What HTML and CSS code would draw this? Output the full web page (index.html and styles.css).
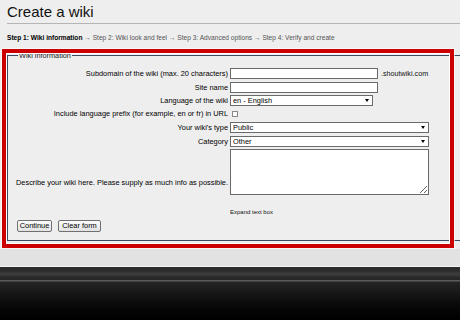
FILE: index.html
```html
<!DOCTYPE html>
<html>
<head>
<meta charset="utf-8">
<link rel="stylesheet" href="styles.css">
</head>
<body>
<div class="page">
  <h1 class="title">Create a wiki</h1>
  <p class="steps"><b class="step-current">Step 1: Wiki information</b> → Step 2: Wiki look and feel → Step 3: Advanced options → Step 4: Verify and create</p>
  <fieldset class="wiki-info">
    <legend class="legend">Wiki information</legend>
    <div class="form-grid">
      <label class="lbl">Subdomain of the wiki (max. 20 characters)</label>
      <div class="ctl"><input class="txt" type="text"><span class="suffix">.shoutwiki.com</span></div>

      <label class="lbl">Site name</label>
      <div class="ctl"><input class="txt" type="text"></div>

      <label class="lbl">Language of the wiki</label>
      <div class="ctl"><span class="sel sel-lang"><select class="sel-box"><option>en - English</option></select></span></div>

      <label class="lbl">Include language prefix (for example, en or fr) in URL</label>
      <div class="ctl"><input class="chk" type="checkbox"></div>

      <label class="lbl">Your wiki's type</label>
      <div class="ctl"><span class="sel sel-wide"><select class="sel-box"><option>Public</option></select></span></div>

      <label class="lbl">Category</label>
      <div class="ctl"><span class="sel sel-wide"><select class="sel-box"><option>Other</option></select></span></div>

      <label class="lbl lbl-desc">Describe your wiki here. Please supply as much info as possible.</label>
      <div class="ctl"><textarea class="area"></textarea></div>

      <div class="spacer"></div>
      <div class="ctl ctl-expand"><span class="expand">Expand text box</span></div>

      <div class="buttons">
        <button class="btn btn-continue" type="button">Continue</button>
        <button class="btn btn-clear" type="button">Clear form</button>
      </div>
    </div>
  </fieldset>
  <div class="highlight"></div>
</div>
<div class="band"></div>
<div class="footer"></div>
</body>
</html>
```

FILE: styles.css
```css
html, body {
  margin: 0;
  padding: 0;
}
body {
  width: 460px;
  height: 320px;
  overflow: hidden;
  background: #eeeeee;
  font-family: "Liberation Sans", Arial, sans-serif;
  color: #000;
}
.page {
  position: relative;
  height: 249px;
  padding-left: 7px;
  overflow: hidden;
  background: #eeeeee;
}
.title {
  margin: 3px 0 0 0;
  padding: 0 0 2px 0;
  font-size: 15px;
  line-height: 18px;
  font-weight: normal;
  color: #111;
  border-bottom: 1px solid #b5b5b5;
}
.steps {
  margin: 9px 0 0 0;
  font-size: 6.6px;
  line-height: 9px;
  color: #555;
  white-space: nowrap;
}
.step-current {
  color: #000;
  font-weight: bold;
}
.wiki-info {
  margin: 9px 0 0 0;
  padding: 6px 0 7px 0;
  width: 470px;
  box-sizing: border-box;
  border: 1px solid #3b4a66;
  min-width: 0;
}
.legend {
  margin-left: 10px;
  padding: 0 1px;
  font-size: 7.3px;
  line-height: 9px;
  color: #222;
}
.form-grid {
  display: grid;
  grid-template-columns: 221px 1fr;
  grid-template-rows: 14px 14px 13px 13px 15px 12px 50px 22px 14px;
  column-gap: 1px;
  font-size: 7.4px;
  line-height: 9px;
}
.lbl {
  align-self: center;
  text-align: right;
  padding-right: 1px;
  white-space: nowrap;
  color: #000;
}
.lbl-desc {
  align-self: end;
  margin-bottom: 10px;
}
.ctl {
  display: flex;
  align-items: center;
}
.txt {
  box-sizing: border-box;
  width: 148px;
  height: 11px;
  margin: 0;
  padding: 0 2px;
  border: 1px solid #6a6a6a;
  background: #fff;
  font: inherit;
}
.suffix {
  margin-left: 3px;
  color: #111;
  font-size: 7.2px;
}
.sel {
  position: relative;
  display: inline-block;
  height: 11px;
}
.sel-lang { width: 143px; }
.sel-wide { width: 199px; }
.sel::after {
  content: "";
  position: absolute;
  right: 4px;
  top: 4px;
  border-left: 2.5px solid transparent;
  border-right: 2.5px solid transparent;
  border-top: 3.5px solid #000;
}
.sel-box {
  -webkit-appearance: none;
  appearance: none;
  box-sizing: border-box;
  display: block;
  width: 100%;
  height: 11px;
  margin: 0;
  padding: 0 0 0 2px;
  border: 1px solid #6a6a6a;
  border-radius: 0;
  background: #fff;
  font-family: inherit;
  font-size: 7.4px;
  line-height: 9px;
  color: #000;
}
.chk {
  -webkit-appearance: none;
  appearance: none;
  box-sizing: border-box;
  width: 6px;
  height: 6px;
  margin: 0 0 0 2px;
  border: 1px solid #8a8a8a;
  background: #fafafa;
}
.area {
  box-sizing: border-box;
  width: 199px;
  height: 46px;
  margin: 0;
  border: 1px solid #6a6a6a;
  background: #fff;
  resize: both;
}
.ctl-expand {
  align-items: flex-end;
  padding-bottom: 3px;
}
.expand {
  font-size: 6px;
  line-height: 8px;
  color: #111;
}
.buttons {
  grid-column: 1 / -1;
  display: flex;
  align-items: center;
  gap: 6px;
  padding-left: 9px;
}
.btn {
  box-sizing: border-box;
  height: 12px;
  margin: 0;
  padding: 0;
  border: 1px solid #707070;
  border-radius: 2px;
  background: linear-gradient(#fbfbfb, #e2e2e2);
  font-family: inherit;
  font-size: 7.4px;
  line-height: 10px;
  color: #000;
}
.btn-continue { width: 35px; }
.btn-clear { width: 43px; }
.highlight {
  position: absolute;
  left: 2px;
  top: 49px;
  width: 452px;
  height: 199px;
  box-sizing: border-box;
  border: 4px solid #cc0000;
  box-shadow: inset 0 0 0 1px #ffffff, 0 0 0 1px rgba(255, 255, 255, 0.6);
  pointer-events: none;
}
.band {
  height: 17px;
  background: #e2e2e2;
}
.footer {
  height: 53px;
  border-top: 1px solid #f6f6f6;
  background: linear-gradient(to bottom,
    #2b2b2b 0px, #2f2f2f 5px, #3e3e3e 6px, #3a3a3a 8px, #2a2a2a 10px,
    #262626 13px, #5c5c5c 13px, #5c5c5c 14px, #242424 15px,
    #151515 28px, #050505 42px, #000000 53px);
}
```
